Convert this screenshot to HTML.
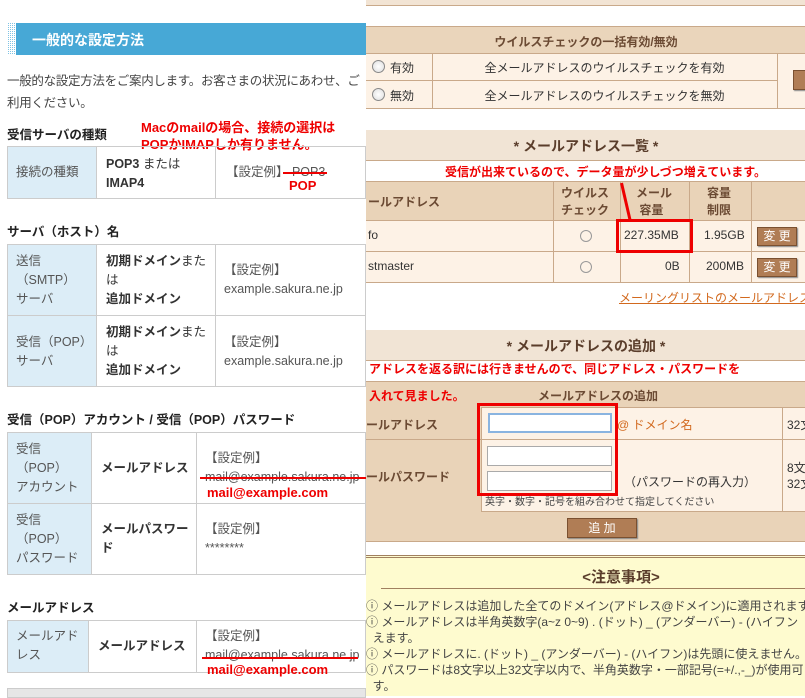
<!DOCTYPE html>
<html><head><meta charset="utf-8"><style>
*{box-sizing:border-box;margin:0;padding:0}
body{width:805px;height:696px;overflow:hidden;background:#fff;position:relative;font-family:"Liberation Sans","Noto Sans CJK JP",sans-serif;}
.a{position:absolute;white-space:nowrap}
.t{font-size:12.5px;color:#333;line-height:19px}
.b{font-weight:bold}
.h3{font-size:12.5px;font-weight:bold;color:#222}
.bx{position:absolute;border:1px solid #ccc}
.lb{background:#dcedf7;color:#555}
.red{color:#e00;font-weight:bold}
.r{font-size:12px;color:#333}
.btn{position:absolute;background:#b07d55;border:1px solid #7a5030;color:#fff;font-size:12px;text-align:center;box-shadow:1px 1px 1px #888}
</style></head><body>
<!-- LEFT -->
<div class="a" style="left:7px;top:23px;width:359px;height:32px;background:#47a8d6"></div>
<div class="a" style="left:7px;top:23px;width:9px;height:32px;background:repeating-linear-gradient(90deg,#fff 0 1px,transparent 1px 2px),repeating-linear-gradient(0deg,#fff 0 1px,#7fc3e4 1px 2px)"></div>
<div class="a" style="left:32px;top:30px;color:#fff;font-size:14px;font-weight:bold">一般的な設定方法</div>
<div class="a t" style="left:7px;top:70px;line-height:22px;color:#444;letter-spacing:-0.3px">一般的な設定方法をご案内します。お客さまの状況にあわせ、ご<br>利用ください。</div>

<div class="a h3" style="left:7px;top:124px">受信サーバの種類</div>
<div class="a red" style="left:141px;top:119px;font-size:13px;line-height:17px">Macのmailの場合、接続の選択は<br>POPかIMAPしか有りません。</div>
<div class="bx" style="left:7px;top:146px;width:359px;height:53px"></div>
<div class="a lb" style="left:8px;top:147px;width:89px;height:51px;border-right:1px solid #ccc"></div>
<div class="a" style="left:215px;top:146px;width:1px;height:53px;background:#ccc"></div>
<div class="a t" style="left:16px;top:163px;color:#555">接続の種類</div>
<div class="a t" style="left:106px;top:155px"><b>POP3</b> または<br><b>IMAP4</b></div>
<div class="a t" style="left:226px;top:163px;color:#555">【設定例】 POP3</div>
<div class="a" style="left:283px;top:172px;width:44px;height:2px;background:#e00"></div>
<div class="a red" style="left:289px;top:178px;font-size:13px">POP</div>

<div class="a h3" style="left:7px;top:221px">サーバ（ホスト）名</div>
<div class="bx" style="left:7px;top:244px;width:359px;height:143px"></div>
<div class="a lb" style="left:8px;top:245px;width:89px;height:141px;border-right:1px solid #ccc"></div>
<div class="a" style="left:215px;top:244px;width:1px;height:143px;background:#ccc"></div>
<div class="a" style="left:7px;top:315px;width:359px;height:1px;background:#ccc"></div>
<div class="a t" style="left:16px;top:252px;color:#555">送信<br>（SMTP）<br>サーバ</div>
<div class="a t" style="left:106px;top:252px"><b>初期ドメイン</b>また<br>は<br><b>追加ドメイン</b></div>
<div class="a t" style="left:224px;top:261px;color:#555">【設定例】<br>example.sakura.ne.jp</div>
<div class="a t" style="left:16px;top:333px;color:#555">受信（POP）<br>サーバ</div>
<div class="a t" style="left:106px;top:323px"><b>初期ドメイン</b>また<br>は<br><b>追加ドメイン</b></div>
<div class="a t" style="left:224px;top:333px;color:#555">【設定例】<br>example.sakura.ne.jp</div>

<div class="a h3" style="left:7px;top:409px">受信（POP）アカウント / 受信（POP）パスワード</div>
<div class="bx" style="left:7px;top:432px;width:359px;height:143px"></div>
<div class="a lb" style="left:8px;top:433px;width:84px;height:141px;border-right:1px solid #ccc"></div>
<div class="a" style="left:196px;top:432px;width:1px;height:143px;background:#ccc"></div>
<div class="a" style="left:7px;top:503px;width:359px;height:1px;background:#ccc"></div>
<div class="a t" style="left:16px;top:440px;color:#555">受信<br>（POP）<br>アカウント</div>
<div class="a t b" style="left:101px;top:459px">メールアドレス</div>
<div class="a t" style="left:205px;top:449px;color:#555">【設定例】<br>mail@example.sakura.ne.jp</div>
<div class="a" style="left:200px;top:477px;width:168px;height:2px;background:#e00"></div>
<div class="a red" style="left:207px;top:485px;font-size:13px">mail@example.com</div>
<div class="a t" style="left:16px;top:511px;color:#555">受信<br>（POP）<br>パスワード</div>
<div class="a t b" style="left:101px;top:520px">メールパスワー<br>ド</div>
<div class="a t" style="left:205px;top:520px;color:#555">【設定例】<br>********</div>

<div class="a h3" style="left:7px;top:597px">メールアドレス</div>
<div class="bx" style="left:7px;top:620px;width:359px;height:53px"></div>
<div class="a lb" style="left:8px;top:621px;width:81px;height:51px;border-right:1px solid #ccc"></div>
<div class="a" style="left:196px;top:620px;width:1px;height:53px;background:#ccc"></div>
<div class="a t" style="left:16px;top:627px;color:#555">メールアド<br>レス</div>
<div class="a t b" style="left:98px;top:637px">メールアドレス</div>
<div class="a t" style="left:205px;top:627px;color:#555">【設定例】<br>mail@example.sakura.ne.jp</div>
<div class="a" style="left:202px;top:657px;width:156px;height:2px;background:#e00"></div>
<div class="a red" style="left:207px;top:662px;font-size:13px">mail@example.com</div>
<div class="a" style="left:7px;top:688px;width:359px;height:10px;background:#e6e6e6;border:1px solid #ccc"></div>

<!-- RIGHT -->
<div class="a" style="left:366px;top:0;width:439px;height:696px;background:#fff"></div>
<div class="a" style="left:366px;top:0;width:439px;height:6px;background:#f2e4d4;border-bottom:1px solid #c9a98a"></div>
<div class="a" style="left:366px;top:26px;width:439px;height:27px;background:#ead5bb;border-top:1px solid #c9a98a"></div>
<div class="a b" style="left:366px;top:33px;text-align:center;font-size:12px;color:#6b4a33;width:440px">ウイルスチェックの一括有効/無効</div>
<div class="a" style="left:366px;top:53px;width:439px;height:56px;background:#fdf2e6;border-top:1px solid #c9a98a;border-bottom:1px solid #c9a98a"></div>
<div class="a" style="left:366px;top:80px;width:411px;height:1px;background:#c9a98a"></div>
<div class="a" style="left:432px;top:53px;width:1px;height:56px;background:#c9a98a"></div>
<div class="a" style="left:777px;top:53px;width:1px;height:56px;background:#c9a98a"></div>
<div class="a" style="left:372px;top:60px;width:13px;height:13px;border-radius:50%;border:1px solid #888;background:radial-gradient(#fff,#ddd)"></div>
<div class="a" style="left:372px;top:88px;width:13px;height:13px;border-radius:50%;border:1px solid #888;background:radial-gradient(#fff,#ddd)"></div>
<div class="a r" style="left:390px;top:59px">有効</div>
<div class="a r" style="left:390px;top:87px">無効</div>
<div class="a r" style="left:432px;top:59px;width:345px;text-align:center">全メールアドレスのウイルスチェックを有効</div>
<div class="a r" style="left:432px;top:87px;width:345px;text-align:center">全メールアドレスのウイルスチェックを無効</div>
<div class="btn" style="left:793px;top:70px;width:20px;height:20px"></div>

<div class="a" style="left:366px;top:130px;width:439px;height:31px;background:#f1e4d5;border-bottom:1px solid #c9a98a"></div>
<div class="a b" style="left:366px;top:136px;width:440px;text-align:center;font-size:14px;color:#5a3d2b">* メールアドレス一覧 *</div>
<div class="a red" style="left:445px;top:163px;font-size:12px">受信が出来ているので、データ量が少しづつ増えています。</div>
<div class="a" style="left:366px;top:181px;width:439px;height:40px;background:#e9d3b8;border-top:1px solid #c9a98a;border-bottom:1px solid #c9a98a"></div>
<div class="a" style="left:366px;top:221px;width:439px;height:62px;background:#fdf2e6;border-bottom:1px solid #c9a98a"></div>
<div class="a" style="left:366px;top:251px;width:439px;height:1px;background:#c9a98a"></div>
<div class="a" style="left:553px;top:181px;width:1px;height:102px;background:#c9a98a"></div>
<div class="a" style="left:620px;top:181px;width:1px;height:102px;background:#c9a98a"></div>
<div class="a" style="left:689px;top:181px;width:1px;height:102px;background:#c9a98a"></div>
<div class="a" style="left:751px;top:181px;width:1px;height:102px;background:#c9a98a"></div>
<div class="a b" style="left:368px;top:193px;font-size:12px;color:#6b4a33">ールアドレス</div>
<div class="a b" style="left:561px;top:185px;font-size:12px;color:#6b4a33;line-height:17px">ウイルス<br>チェック</div>
<div class="a b" style="left:636px;top:185px;font-size:12px;color:#6b4a33;line-height:17px">メール<br>&nbsp;容量</div>
<div class="a b" style="left:707px;top:185px;font-size:12px;color:#6b4a33;line-height:17px">容量<br>制限</div>
<div class="a r" style="left:368px;top:228px">fo</div>
<div class="a r" style="left:368px;top:259px">stmaster</div>
<div class="a" style="left:580px;top:230px;width:12px;height:12px;border-radius:50%;border:1px solid #999"></div>
<div class="a" style="left:580px;top:261px;width:12px;height:12px;border-radius:50%;border:1px solid #999"></div>
<div class="a r" style="left:624px;top:228px">227.35MB</div>
<div class="a r" style="left:665px;top:259px">0B</div>
<div class="a r" style="left:704px;top:228px">1.95GB</div>
<div class="a r" style="left:706px;top:259px">200MB</div>
<div class="btn" style="left:757px;top:227px;width:40px;height:19px;line-height:17px">変 更</div>
<div class="btn" style="left:757px;top:258px;width:40px;height:19px;line-height:17px">変 更</div>
<div class="a" style="left:616px;top:219px;width:77px;height:34px;border:3px solid #e00"></div>
<div class="a" style="left:620px;top:183px;width:3px;height:38px;background:#e00;transform:rotate(-13deg);transform-origin:top"></div>
<div class="a" style="left:619px;top:289px;font-size:12px;color:#d2691e;text-decoration:underline">メーリングリストのメールアドレス</div>

<div class="a" style="left:366px;top:330px;width:439px;height:31px;background:#f1e4d5;border-bottom:1px solid #c9a98a"></div>
<div class="a b" style="left:366px;top:336px;width:440px;text-align:center;font-size:14px;color:#5a3d2b">* メールアドレスの追加 *</div>
<div class="a" style="left:366px;top:381px;width:439px;height:161px;background:#e9d3b8;border-top:1px solid #c9a98a;border-bottom:1px solid #c9a98a"></div>
<div class="a" style="left:366px;top:407px;width:439px;height:105px;background:#fdf2e6;border-top:1px solid #c9a98a;border-bottom:1px solid #c9a98a"></div>
<div class="a" style="left:366px;top:407px;width:115px;height:105px;background:#e9d3b8"></div>
<div class="a" style="left:481px;top:407px;width:1px;height:105px;background:#c9a98a"></div>
<div class="a" style="left:782px;top:407px;width:1px;height:105px;background:#c9a98a"></div>
<div class="a" style="left:366px;top:439px;width:439px;height:1px;background:#c9a98a"></div>
<div class="a red" style="left:369px;top:360px;font-size:12px">アドレスを返る訳には行きませんので、同じアドレス・パスワードを</div>
<div class="a red" style="left:369px;top:387px;font-size:12px">入れて見ました。</div>
<div class="a b" style="left:538px;top:387px;font-size:12px;color:#6b4a33">メールアドレスの追加</div>
<div class="a b" style="left:366px;top:416px;font-size:12px;color:#6b4a33">ールアドレス</div>
<div class="a b" style="left:366px;top:468px;font-size:12px;color:#6b4a33">ールパスワード</div>
<div class="a" style="left:488px;top:413px;width:124px;height:20px;background:#fff;border:2px solid #8ab4e0"></div>
<div class="a" style="left:487px;top:446px;width:125px;height:20px;background:#fff;border:1px solid #aaa"></div>
<div class="a" style="left:487px;top:471px;width:125px;height:20px;background:#fff;border:1px solid #aaa"></div>
<div class="a" style="left:477px;top:403px;width:141px;height:93px;border:3px solid #e00"></div>
<div class="a" style="left:617px;top:416px;font-size:12px;color:#d2691e">@ ドメイン名</div>
<div class="a r" style="left:624px;top:473px">（パスワードの再入力）</div>
<div class="a" style="left:485px;top:493px;font-size:10px;color:#444">英字・数字・記号を組み合わせて指定してください</div>
<div class="a" style="left:783px;top:408px;width:22px;height:103px;overflow:hidden">
<div class="a r" style="left:4px;top:8px">32文</div>
<div class="a r" style="left:4px;top:52px;line-height:16px">8文<br>32文</div></div>
<div class="btn" style="left:567px;top:518px;width:70px;height:20px;line-height:18px">追 加</div>

<div class="a" style="left:366px;top:555px;width:439px;height:141px;background:#fefbcf;border-top:3px double #a08060"></div>
<div class="a b" style="left:366px;top:566px;text-align:center;font-size:15px;color:#5a3d2b;width:510px">&lt;注意事項&gt;</div>
<div class="a" style="left:381px;top:588px;width:424px;height:1px;background:#a08060"></div>
<div class="a r" style="left:366px;top:598px;line-height:16px;color:#444">ⓘ メールアドレスは追加した全てのドメイン(アドレス@ドメイン)に適用されます。<br>ⓘ メールアドレスは半角英数字(a~z 0~9) . (ドット) _ (アンダーバー) - (ハイフン<br>&nbsp;&nbsp;えます。<br>ⓘ メールアドレスに. (ドット) _ (アンダーバー) - (ハイフン)は先頭に使えません。<br>ⓘ パスワードは8文字以上32文字以内で、半角英数字・一部記号(=+/.,-_)が使用可<br>&nbsp;&nbsp;す。</div>
</body></html>
